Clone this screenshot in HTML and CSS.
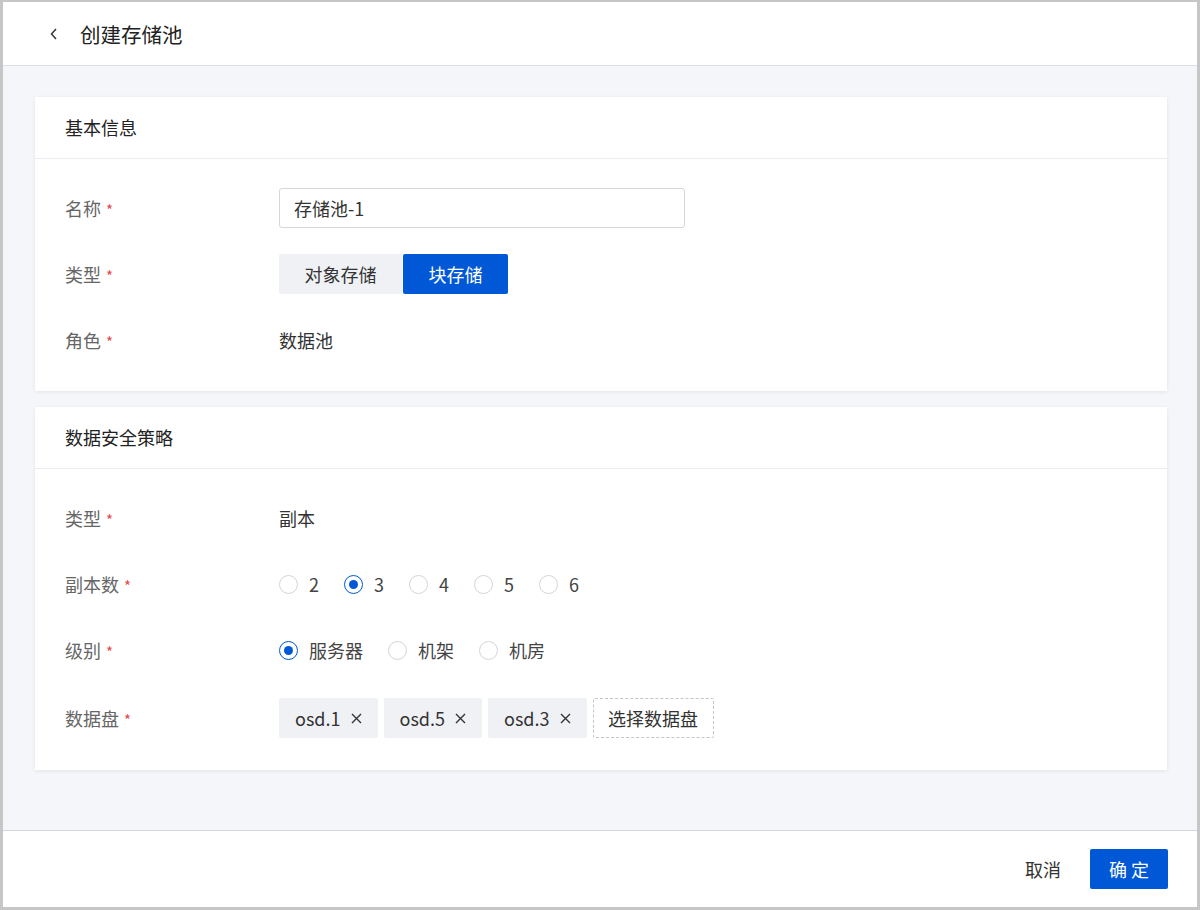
FILE: index.html
```html
<!DOCTYPE html>
<html lang="zh-CN">
<head>
  <meta charset="UTF-8" />
  <meta name="viewport" content="width=device-width, initial-scale=1.0"/>
  <title>创建存储池</title>
  <link rel="stylesheet" href="styles.css">
</head>
<body>
  <div class="frame">
    <div class="page-header">
      <span class="back">
        <svg width="10" height="14" viewBox="0 0 10 14"><path d="M7 2 L2.5 7 L7 12" fill="none" stroke="#333" stroke-width="1.5"/></svg>
      </span>
      <h1>创建存储池</h1>
    </div>

    <div class="page-body">
      <div class="card">
        <div class="card-title">基本信息</div>
        <div class="card-body">
          <div class="row">
            <div class="label">名称 <i>*</i></div>
            <div class="field"><input class="text-input" type="text" value="存储池-1" /></div>
          </div>
          <div class="row">
            <div class="label">类型 <i>*</i></div>
            <div class="field seg">
              <span class="seg-item">对象存储</span>
              <span class="seg-item active">块存储</span>
            </div>
          </div>
          <div class="row">
            <div class="label">角色 <i>*</i></div>
            <div class="field value">数据池</div>
          </div>
        </div>
      </div>

      <div class="card">
        <div class="card-title">数据安全策略</div>
        <div class="card-body">
          <div class="row">
            <div class="label">类型 <i>*</i></div>
            <div class="field value">副本</div>
          </div>
          <div class="row">
            <div class="label">副本数 <i>*</i></div>
            <div class="field radios">
              <label class="radio"><span class="dot"></span>2</label>
              <label class="radio checked"><span class="dot"></span>3</label>
              <label class="radio"><span class="dot"></span>4</label>
              <label class="radio"><span class="dot"></span>5</label>
              <label class="radio"><span class="dot"></span>6</label>
            </div>
          </div>
          <div class="row">
            <div class="label">级别 <i>*</i></div>
            <div class="field radios">
              <label class="radio checked"><span class="dot"></span>服务器</label>
              <label class="radio"><span class="dot"></span>机架</label>
              <label class="radio"><span class="dot"></span>机房</label>
            </div>
          </div>
          <div class="row row-disks">
            <div class="label">数据盘 <i>*</i></div>
            <div class="field tags">
              <span class="tag">osd.1 <svg width="11" height="11" viewBox="0 0 11 11"><path d="M1 1 L10 10 M10 1 L1 10" stroke="#333" stroke-width="1.4"/></svg></span>
              <span class="tag">osd.5 <svg width="11" height="11" viewBox="0 0 11 11"><path d="M1 1 L10 10 M10 1 L1 10" stroke="#333" stroke-width="1.4"/></svg></span>
              <span class="tag">osd.3 <svg width="11" height="11" viewBox="0 0 11 11"><path d="M1 1 L10 10 M10 1 L1 10" stroke="#333" stroke-width="1.4"/></svg></span>
              <span class="tag-add">选择数据盘</span>
            </div>
          </div>
        </div>
      </div>
    </div>

    <div class="page-footer">
      <button class="btn-text">取消</button>
      <button class="btn-primary">确 定</button>
    </div>
  </div>
</body>
</html>
```

FILE: styles.css
```css
* {
  box-sizing: border-box;
}
body {
  margin: 0;
  font-family: "Noto Sans CJK SC", "Noto Sans", sans-serif;
  color: #333;
}
.frame {
  width: 1200px;
  height: 910px;
  border: 3px solid #c6c6c6;
  border-top-width: 2px;
  display: flex;
  flex-direction: column;
  background: #f5f6fa;
}
.page-header {
  height: 64px;
  flex-shrink: 0;
  background: #fff;
  border-bottom: 1px solid #dcdde2;
  display: flex;
  align-items: center;
  padding-left: 46px;
}
.back {
  display: flex;
  width: 31px;
}
.page-header h1 {
  margin: 0;
  font-size: 20.5px;
  font-weight: 400;
  color: #222;
}
.page-body {
  flex: 1;
  padding: 31px 30px 0 32px;
}
.card {
  background: #fff;
  box-shadow: 0 1px 4px rgba(0, 0, 0, 0.08);
  margin-bottom: 16px;
}
.card-title {
  height: 62px;
  line-height: 61px;
  padding-left: 30px;
  font-size: 18px;
  color: #222;
  border-bottom: 1px solid #ececf0;
}
.card-body {
  padding: 29px 30px 31px;
  display: flex;
  flex-direction: column;
  gap: 26px;
}
.card:last-child .card-body {
  padding-bottom: 32px;
}
.row {
  display: flex;
  align-items: center;
  height: 40px;
}
.row-disks {
  margin-top: 2px;
}
.label {
  width: 214px;
  font-size: 18px;
  color: #666;
}
.label i {
  font-style: normal;
  color: #e5484d;
  font-size: 15px;
  margin-left: 1px;
}
.field {
  font-size: 18px;
}
.text-input {
  width: 406px;
  height: 40px;
  border: 1px solid #d6d7dc;
  border-radius: 3px;
  padding: 0 14px;
  font: inherit;
  font-size: 18px;
  color: #333;
  outline: none;
}
.seg {
  display: flex;
  gap: 1px;
}
.seg-item {
  height: 40px;
  line-height: 40px;
  padding: 0 25.5px;
  background: #f0f1f5;
  border-radius: 2px;
  color: #333;
}
.seg-item.active {
  background: #0058d6;
  color: #fff;
  padding: 0 25.5px;
}
.value {
  color: #333;
}
.radios {
  display: flex;
  gap: 25px;
}
.radio {
  display: flex;
  align-items: center;
  color: #444;
}
.radio .dot {
  width: 19px;
  height: 19px;
  border-radius: 50%;
  border: 1px solid #d4d5da;
  margin-right: 11px;
  display: flex;
  align-items: center;
  justify-content: center;
}
.radio.checked .dot {
  border: 1.5px solid #0058d6;
}
.radio.checked .dot::after {
  content: "";
  width: 9px;
  height: 9px;
  border-radius: 50%;
  background: #0058d6;
}
.tags {
  display: flex;
  gap: 6px;
}
.tag {
  height: 40px;
  display: flex;
  align-items: center;
  gap: 10px;
  padding: 0 16px 0 16px;
  background: #f0f1f5;
  border-radius: 2px;
  color: #333;
}
.tag-add {
  height: 40px;
  line-height: 38px;
  padding: 0 14.5px;
  border: 1px dashed #c4c5ca;
  border-radius: 2px;
  color: #333;
}
.page-footer {
  height: 77px;
  flex-shrink: 0;
  background: #fff;
  border-top: 1px solid #d6d7dc;
  display: flex;
  align-items: center;
  justify-content: flex-end;
  padding-right: 29px;
}
.btn-text {
  background: none;
  border: none;
  font: inherit;
  font-size: 18px;
  color: #333;
  padding: 0 16px;
  margin-right: 13px;
}
.btn-primary {
  width: 78px;
  height: 40px;
  background: #0058d6;
  color: #fff;
  border: none;
  border-radius: 2px;
  font: inherit;
  font-size: 18px;
}
```
